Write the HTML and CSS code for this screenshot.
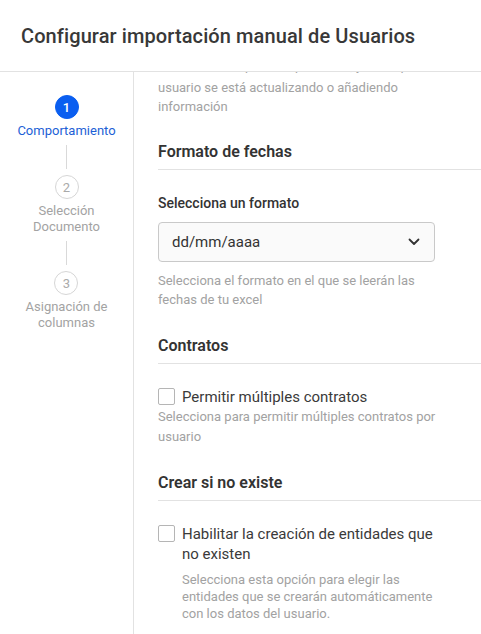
FILE: index.html
```html
<!DOCTYPE html>
<html lang="es">
<head>
<meta charset="utf-8">
<title>Configurar importación manual de Usuarios</title>
<link rel="stylesheet" href="styles.css">
</head>
<body>
<div class="page">
  <header class="header">
    <h1 class="title">Configurar importación manual de Usuarios</h1>
  </header>
  <div class="body">
    <nav class="steps">
      <div class="step active">
        <div class="num">1</div>
        <div class="label">Comportamiento</div>
      </div>
      <div class="connector"></div>
      <div class="step">
        <div class="num">2</div>
        <div class="label">Selección<br>Documento</div>
      </div>
      <div class="connector"></div>
      <div class="step">
        <div class="num">3</div>
        <div class="label">Asignación de<br>columnas</div>
      </div>
    </nav>
    <main class="content">
      <div class="scroll">
        <p class="help intro"><span class="first-line">Selecciona el tipo de importación, ya sea que el</span>usuario se está actualizando o añadiendo<br>información</p>

        <h2 class="section">Formato de fechas</h2>
        <div class="field">
          <div class="field-label">Selecciona un formato</div>
          <div class="select">
            <span>dd/mm/aaaa</span>
            <svg class="chev" width="12" height="8" viewBox="0 0 12 8"><path d="M1.5 1.5 L6 6 L10.5 1.5" fill="none" stroke="#333" stroke-width="1.8" stroke-linecap="round" stroke-linejoin="round"/></svg>
          </div>
          <p class="help">Selecciona el formato en el que se leerán las fechas de tu excel</p>
        </div>

        <h2 class="section">Contratos</h2>
        <div class="field">
          <label class="check"><span class="box"></span><span class="check-text">Permitir múltiples contratos</span></label>
          <p class="help tight">Selecciona para permitir múltiples contratos por usuario</p>
        </div>

        <h2 class="section">Crear si no existe</h2>
        <div class="field">
          <label class="check"><span class="box"></span><span class="check-text">Habilitar la creación de entidades que no existen</span></label>
          <p class="help small indent">Selecciona esta opción para elegir las entidades que se crearán automáticamente con los datos del usuario.</p>
        </div>
      </div>
    </main>
  </div>
</div>
</body>
</html>
```
FILE: styles.css
```css
* { box-sizing: border-box; }
html, body { margin: 0; padding: 0; background: #fff; }
body {
  font-family: Roboto, "Noto Sans", "Liberation Sans", sans-serif;
  color: #333;
  width: 481px;
  height: 634px;
  overflow: hidden;
}
.page { display: flex; flex-direction: column; height: 634px; }
.header {
  height: 72px;
  border-bottom: 1px solid #e2e2e2;
  display: flex;
  align-items: center;
  padding-left: 21px;
  flex-shrink: 0;
}
.title {
  margin: 0;
  font-size: 20px;
  font-weight: 500;
  color: #383838;
  letter-spacing: 0.1px;
}
.body { display: flex; flex: 1; min-height: 0; }
.steps {
  width: 134px;
  border-right: 1px solid #e2e2e2;
  padding-top: 23px;
  display: flex;
  flex-direction: column;
  align-items: center;
  flex-shrink: 0;
}
.step { display: flex; flex-direction: column; align-items: center; }
.num {
  width: 24px; height: 24px;
  border-radius: 50%;
  border: 1px solid #d6d6d6;
  color: #aaa;
  font-size: 13px;
  display: flex; align-items: center; justify-content: center;
}
.step.active .num {
  background: #0a5ef0;
  border-color: #0a5ef0;
  color: #fff;
  font-weight: 500;
}
.label {
  margin-top: 4px;
  font-size: 13px;
  line-height: 16px;
  color: #a3a3a3;
  text-align: center;
}
.step.active .label { color: #1d5fd6; }
.connector {
  width: 1px;
  height: 24px;
  background: #d9d9d9;
  margin: 6px 0;
}
.content { flex: 1; overflow: hidden; padding-left: 24px; }
.scroll { margin-top: -19.5px; }
.first-line { display: block; line-height: 25px; }
.help {
  margin: 0;
  font-size: 13px;
  line-height: 19px;
  color: #a2a2a2;
  max-width: 285px;
}
.help.tight { line-height: 20px; }
.help.small { line-height: 17px; margin-top: 7px; }
.help.indent { padding-left: 24px; }
.section {
  margin: 26.5px 0 0;
  font-size: 16px;
  line-height: 20px;
  font-weight: 600;
  color: #333;
  padding-bottom: 7px;
  border-bottom: 1px solid #e2e2e2;
}
.field { padding-top: 23px; max-width: 280px; }
.field-label {
  font-size: 14px;
  line-height: 20px;
  font-weight: 500;
  color: #333;
}
.select {
  margin-top: 9px;
  height: 40px;
  width: 277px;
  border: 1px solid #c9c9c9;
  border-radius: 4px;
  background: #fafafa;
  display: flex;
  align-items: center;
  justify-content: space-between;
  padding: 0 14px 0 13px;
  font-size: 15px;
  color: #333;
  margin-bottom: 9px;
}
.chev { display: block; }
.check {
  display: flex;
  align-items: flex-start;
  gap: 7px;
  font-size: 15px;
  line-height: 20px;
  color: #3a3a3a;
}
.box {
  width: 17px; height: 17px;
  border: 1px solid #b5b5b5;
  border-radius: 2px;
  background: #fff;
  flex-shrink: 0;
  margin-top: 1px;
}
.check-text { max-width: 260px; }
```
